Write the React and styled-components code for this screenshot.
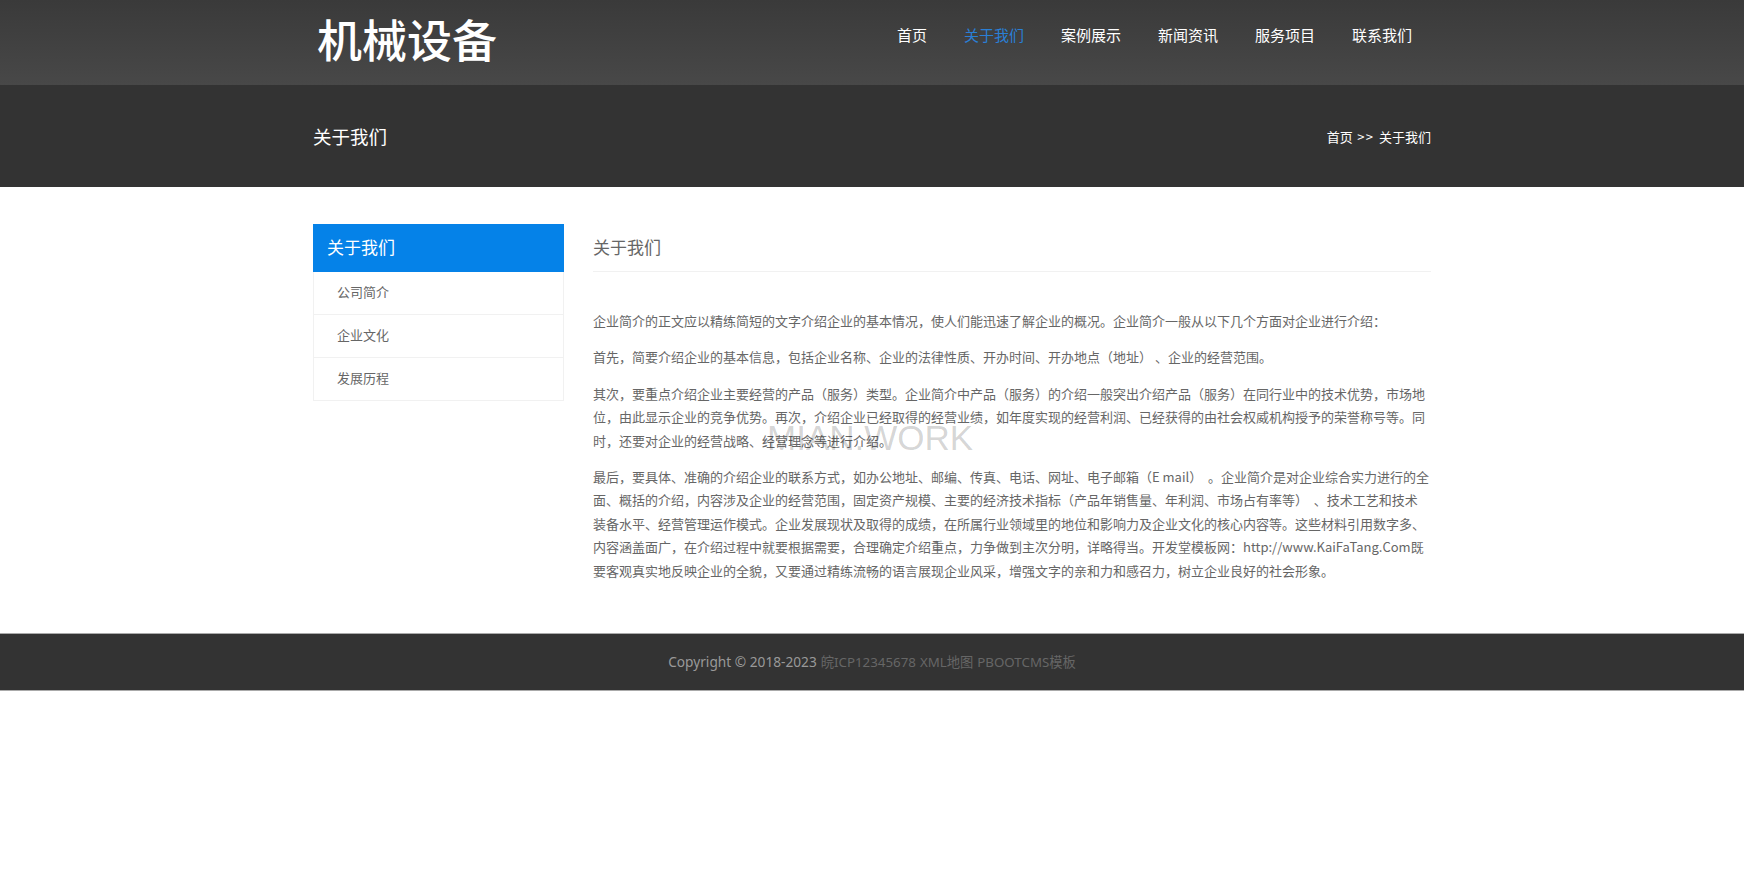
import styled, { createGlobalStyle } from 'styled-components';

const GlobalStyle = createGlobalStyle`
  html, body {
    margin: 0;
    padding: 0;
    background: #fff;
  }
  body {
    font-family: "Noto Sans", "Noto Sans CJK SC", sans-serif;
    font-size: 14px;
    color: #666;
  }
  ul, p, h2 {
    margin: 0;
    padding: 0;
  }
`;

const Container = styled.div`
  width: 1118px;
  margin: 0 auto;
`;

const Header = styled.header`
  height: 85px;
  background: linear-gradient(to bottom, #3a3a3a, #484848);
`;

const HeaderInner = styled(Container)`
  display: flex;
  justify-content: space-between;
  align-items: flex-start;
`;

const Logo = styled.div`
  margin: 8px 0 0 4px;
  font-family: "Noto Sans CJK SC", sans-serif;
  font-size: 45px;
  line-height: 62px;
  font-weight: 500;
  color: #fff;
`;

const Nav = styled.ul`
  display: flex;
  gap: 37px;
  margin-right: 19px;
  padding-top: 24px;
  list-style: none;
`;

const NavItem = styled.li`
  font-family: "Noto Sans CJK SC", sans-serif;
  font-size: 15px;
  line-height: 22px;
  color: ${(p) => (p.$active ? '#2a7fd6' : '#fff')};
`;

const Band = styled.div`
  height: 102px;
  background: #333;
`;

const BandInner = styled(Container)`
  display: flex;
  height: 100%;
  align-items: center;
  justify-content: space-between;
  color: #fff;
`;

const BandTitle = styled.div`
  font-family: "Noto Sans CJK SC", sans-serif;
  font-size: 18.5px;
`;

const Breadcrumb = styled.div`
  font-size: 13px;
  font-family: "Noto Sans CJK SC", sans-serif;
`;

const CrumbSep = styled.span`
  letter-spacing: 1.5px;
`;

const Main = styled(Container)`
  position: relative;
  display: grid;
  grid-template-columns: 251px 838px;
  column-gap: 29px;
  padding-top: 37px;
  height: 446px;
  box-sizing: border-box;
`;

const SideTitle = styled.div`
  height: 48px;
  padding-left: 14px;
  background: #0582e8;
  color: #fff;
  font-family: "Noto Sans CJK SC", sans-serif;
  font-size: 17px;
  line-height: 46px;
`;

const SideList = styled.ul`
  list-style: none;
  border: 1px solid #f1f1f1;
  border-top: none;
`;

const SideItem = styled.li`
  height: 42px;
  padding-left: 23px;
  font-family: "Noto Sans CJK SC", sans-serif;
  font-size: 13px;
  line-height: 40px;
  color: #666;
  & + & {
    border-top: 1px solid #f1f1f1;
  }
`;

const ContentTitle = styled.h2`
  height: 48px;
  border-bottom: 1px solid #f1f1f1;
  box-sizing: border-box;
  font-family: "Noto Sans CJK SC", sans-serif;
  font-size: 17px;
  font-weight: 400;
  line-height: 46px;
  color: #666;
`;

const Article = styled.div`
  padding: 37px 1px 0 0;
`;

const Para = styled.p`
  font-family: "Noto Sans CJK SC", sans-serif;
  font-size: 13px;
  line-height: 23.4px;
  margin-bottom: 13px;
  color: #666;
`;

const Watermark = styled.div`
  position: absolute;
  left: 454px;
  top: 230px;
  font-family: "Liberation Sans", sans-serif;
  font-size: 35px;
  line-height: 42px;
  color: rgba(0, 0, 0, 0.18);
  pointer-events: none;
`;

const Footer = styled.footer`
  height: 58px;
  padding-bottom: 2px;
  box-sizing: border-box;
  border-top: 1px solid #aaa;
  border-bottom: 1px solid #aaa;
  background: #333;
  display: flex;
  align-items: center;
  justify-content: center;
  font-size: 13.7px;
  color: #999;
`;

const FooterLink = styled.a`
  margin-left: 4px;
  font-size: 13.3px;
  color: #666;
`;

export default function App() {
  const nav = ['首页', '关于我们', '案例展示', '新闻资讯', '服务项目', '联系我们'];
  const side = ['公司简介', '企业文化', '发展历程'];

  return (
    <>
      <GlobalStyle />
      <Header>
        <HeaderInner>
          <Logo>机械设备</Logo>
          <Nav>
            {nav.map((n) => (
              <NavItem key={n} $active={n === '关于我们'}>{n}</NavItem>
            ))}
          </Nav>
        </HeaderInner>
      </Header>
      <Band>
        <BandInner>
          <BandTitle>关于我们</BandTitle>
          <Breadcrumb>首页<CrumbSep> &gt;&gt; </CrumbSep>关于我们</Breadcrumb>
        </BandInner>
      </Band>
      <Main>
        <aside>
          <SideTitle>关于我们</SideTitle>
          <SideList>
            {side.map((s) => (
              <SideItem key={s}>{s}</SideItem>
            ))}
          </SideList>
        </aside>
        <section>
          <ContentTitle>关于我们</ContentTitle>
          <Article>
            <Para>企业简介的正文应以精练简短的文字介绍企业的基本情况，使人们能迅速了解企业的概况。企业简介一般从以下几个方面对企业进行介绍：</Para>
            <Para>首先，简要介绍企业的基本信息，包括企业名称、企业的法律性质、开办时间、开办地点（地址） 、企业的经营范围。</Para>
            <Para>其次，要重点介绍企业主要经营的产品（服务）类型。企业简介中产品（服务）的介绍一般突出介绍产品（服务）在同行业中的技术优势，市场地位，由此显示企业的竞争优势。再次，介绍企业已经取得的经营业绩，如年度实现的经营利润、已经获得的由社会权威机构授予的荣誉称号等。同时，还要对企业的经营战略、经营理念等进行介绍。</Para>
            <Para>最后，要具体、准确的介绍企业的联系方式，如办公地址、邮编、传真、电话、网址、电子邮箱（E mail）&nbsp; 。企业简介是对企业综合实力进行的全面、概括的介绍，内容涉及企业的经营范围，固定资产规模、主要的经济技术指标（产品年销售量、年利润、市场占有率等）&nbsp; 、技术工艺和技术装备水平、经营管理运作模式。企业发展现状及取得的成绩，在所属行业领域里的地位和影响力及企业文化的核心内容等。这些材料引用数字多、内容涵盖面广，在介绍过程中就要根据需要，合理确定介绍重点，力争做到主次分明，详略得当。开发堂模板网：http://www.KaiFaTang.Com既要客观真实地反映企业的全貌，又要通过精练流畅的语言展现企业风采，增强文字的亲和力和感召力，树立企业良好的社会形象。</Para>
          </Article>
        </section>
        <Watermark>MIAN.WORK</Watermark>
      </Main>
      <Footer>
        Copyright © 2018-2023
        <FooterLink>皖ICP12345678</FooterLink>
        <FooterLink>XML地图</FooterLink>
        <FooterLink>PBOOTCMS模板</FooterLink>
      </Footer>
    </>
  );
}
